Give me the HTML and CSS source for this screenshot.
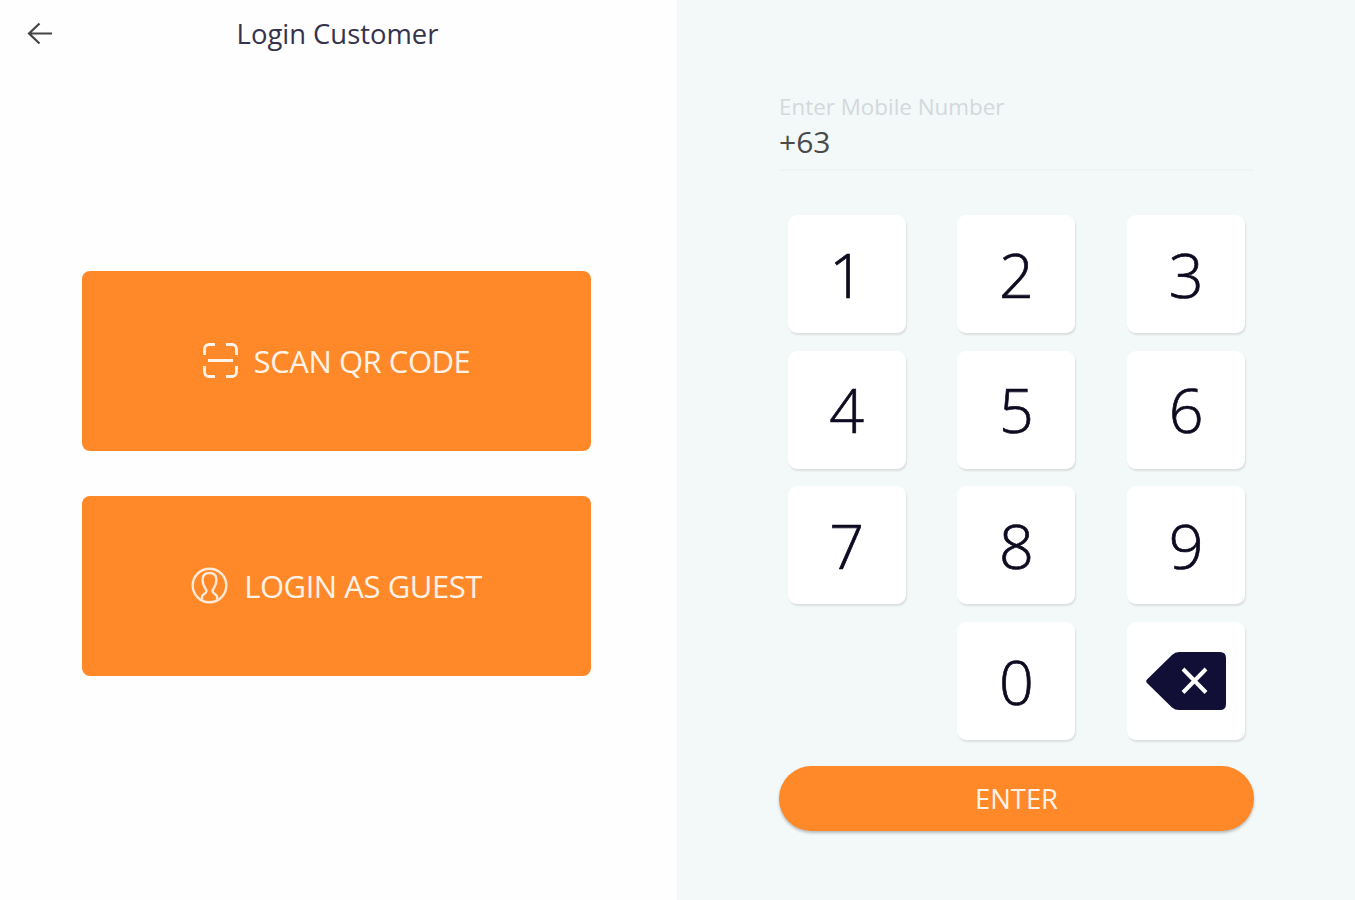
FILE: index.html
```html
<!DOCTYPE html>
<html lang="en">
<head>
    <meta charset="UTF-8">
    <meta name="viewport" content="width=device-width, initial-scale=1.0">
    <title>Login Customer</title>
    <link rel="stylesheet" href="styles.css">
</head>
<body>
    <div class="container">
        <div class="left">
            <div class="header">
                <a href="#" class="back" aria-label="Back">
                    <svg width="26" height="24" viewBox="0 0 26 24" fill="none" stroke="#444" stroke-width="2.2">
                        <path d="M25 11.500H2M12.500 1.500L2 11.500l10.500 10"/>
                    </svg>
                </a>
                <h1>Login Customer</h1>
            </div>
            <div class="options">
                <button class="option-btn">
                    <svg width="35" height="35" viewBox="0 0 35 35" fill="none" stroke="#fff3e8" stroke-width="2.8">
                        <path d="M1.500 12V6a4.500 4.500 0 0 1 4.500-4.500h6M23 1.500h6A4.500 4.500 0 0 1 33.500 6v6M33.500 23v6a4.500 4.500 0 0 1-4.500 4.500h-6M12 33.500H6A4.500 4.500 0 0 1 1.500 29v-6M5 17.500h25"/>
                    </svg>
                    <span>SCAN QR CODE</span>
                </button>
                <button class="option-btn">
                    <svg width="37" height="37" viewBox="0 0 37 37" fill="none" stroke="#ffe9d8" stroke-width="2.4" stroke-linejoin="round">
                        <circle cx="18.500" cy="18.500" r="16.800"/>
                        <path d="M11 32.500v-3c0-2 4.500-2.500 4.500-5.500 0-2.500-4-4.500-4-11 0-4.500 2.800-7 7-7s7 2.500 7 7c0 6.500-4 8.500-4 11 0 3 4.500 3.500 4.500 5.500v3"/>
                    </svg>
                    <span>LOGIN AS GUEST</span>
                </button>
            </div>
        </div>
        <div class="right">
            <div class="field">
                <label>Enter Mobile Number</label>
                <div class="value">+63</div>
            </div>
            <div class="keypad">
                <button class="key">1</button>
                <button class="key">2</button>
                <button class="key">3</button>
                <button class="key">4</button>
                <button class="key">5</button>
                <button class="key">6</button>
                <button class="key">7</button>
                <button class="key">8</button>
                <button class="key">9</button>
                <button class="key zero">0</button>
                <button class="key" aria-label="Delete">
                    <svg width="80" height="58" viewBox="0 0 80 58">
                        <path d="M1 27.500L26 3Q29 0 33 0H74Q80 0 80 6V52Q80 58 74 58H33Q29 58 26 55.500L1 31Q-.5 29 1 27.500Z" fill="#110f35"/>
                        <path d="M37 17L60 40.500M60 17L37 40.500" stroke="#fff" stroke-width="4"/>
                    </svg>
                </button>
            </div>
            <button class="enter-btn">ENTER</button>
        </div>
    </div>
</body>
</html>
```
FILE: styles.css
```css
* {
    box-sizing: border-box;
}
body {
    font-family: 'Open Sans', 'Noto Sans', sans-serif;
    margin: 0;
    background-color: #fefefe;
}
button {
    font-family: inherit;
    border: none;
    padding: 0;
    cursor: pointer;
}
svg {
    display: block;
    flex-shrink: 0;
}
.container {
    display: flex;
    height: 900px;
    overflow: hidden;
}
.left {
    width: 677px;
    flex-shrink: 0;
    background-color: #fefefe;
}
.header {
    display: grid;
    grid-template-columns: 55px 1fr 57px;
    align-items: center;
    height: 68px;
}
.back {
    padding-left: 27px;
}
.header h1 {
    margin: 0;
    font-size: 27.400px;
    font-weight: 400;
    line-height: 40px;
    text-align: center;
    color: #35334d;
}
.options {
    display: flex;
    flex-direction: column;
    gap: 45px;
    padding: 202.500px 86px 0 82px;
}
.option-btn {
    display: flex;
    align-items: center;
    justify-content: center;
    gap: 16px;
    height: 180px;
    border-radius: 8px;
    background-color: #ff8929;
    color: #fff3e8;
    font-size: 31px;
    letter-spacing: -0.450px;
}
.right {
    flex: 1;
    padding: 90px 101px 0 102px;
    background-color: #f3f8f9;
}
.field {
    height: 81px;
    border-bottom: 2px solid #eff3f5;
}
.field label {
    display: block;
    padding-top: 1px;
    font-size: 22.400px;
    line-height: 32px;
    color: #d3d8dc;
}
.value {
    font-size: 30px;
    line-height: 38px;
    color: #4a4a4a;
}
.keypad {
    display: grid;
    grid-template-columns: repeat(3, 118px);
    grid-auto-rows: 118px;
    gap: 17.700px 51.700px;
    padding: 44px 0 0 8.700px;
}
.key {
    display: flex;
    align-items: center;
    justify-content: center;
    border-radius: 9px;
    background-color: #fff;
    box-shadow: 1px 2px 2px rgba(0,0,0,0.1);
    color: #0d0b20;
    font-size: 61px;
    font-weight: 300;
    -webkit-text-stroke: 0.700px #0d0b20;
}
.zero {
    grid-column: 2;
}
.enter-btn {
    width: 475px;
    height: 65px;
    margin-top: 26px;
    border-radius: 33px;
    background-color: #ff8929;
    box-shadow: 0 2px 3px rgba(0,0,0,0.25);
    color: #fff3e8;
    font-size: 27.400px;
}
```
